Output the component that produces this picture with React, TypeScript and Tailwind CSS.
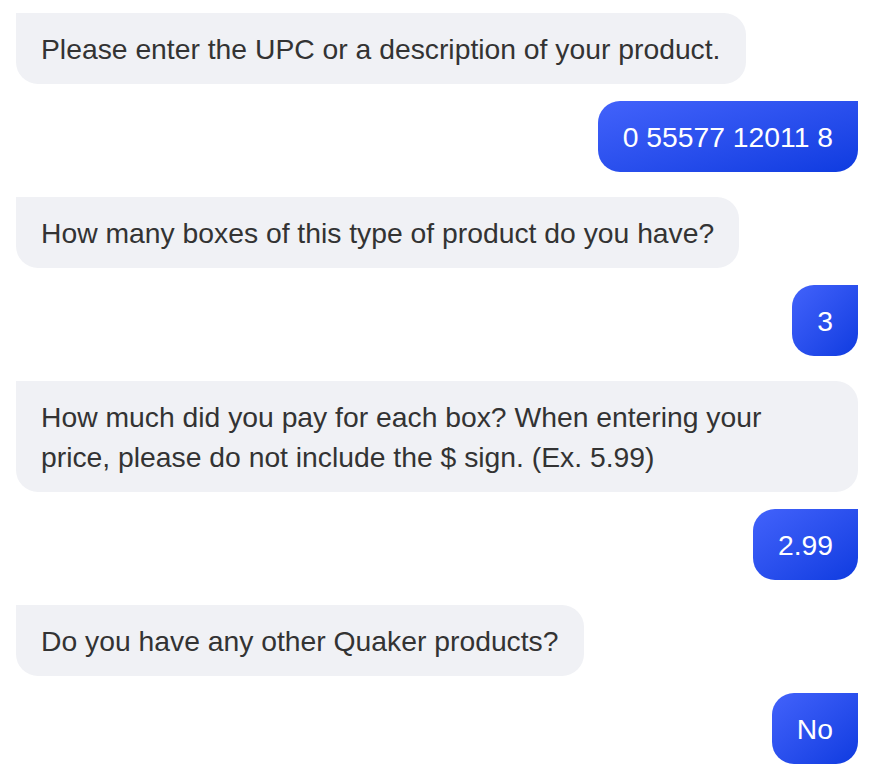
import React from "react";

type Msg = { from: "bot" | "user"; text: string };

const messages: Msg[] = [
  { from: "bot", text: "Please enter the UPC or a description of your product." },
  { from: "user", text: "0 55577 12011 8" },
  { from: "bot", text: "How many boxes of this type of product do you have?" },
  { from: "user", text: "3" },
  {
    from: "bot",
    text: "How much did you pay for each box? When entering your price, please do not include the $ sign. (Ex. 5.99)",
  },
  { from: "user", text: "2.99" },
  { from: "bot", text: "Do you have any other Quaker products?" },
  { from: "user", text: "No" },
];

export default function App() {
  return (
    <main
      className="min-h-screen bg-white pt-[13px] pl-4 pr-[14px] flex flex-col"
      style={{ fontFamily: '"Liberation Sans", Arial, Helvetica, sans-serif' }}
    >
      {messages.map((m, i) =>
        m.from === "bot" ? (
          <div key={i} className={`flex justify-start ${i > 0 ? "mt-[25px]" : ""}`}>
            <div className="max-w-full bg-[#f0f1f5] text-[#333333] text-[28.3px] leading-[40px] px-[25px] py-[15.5px] rounded-[22px] rounded-tl-none">
              {m.text}
            </div>
          </div>
        ) : (
          <div key={i} className="flex justify-end mt-[17px]">
            <div className="bg-gradient-to-br from-[#4262fb] to-[#0e3be0] text-white text-[28.3px] leading-[40px] px-[25px] py-[15.5px] rounded-[22px] rounded-tr-none">
              {m.text}
            </div>
          </div>
        )
      )}
    </main>
  );
}
